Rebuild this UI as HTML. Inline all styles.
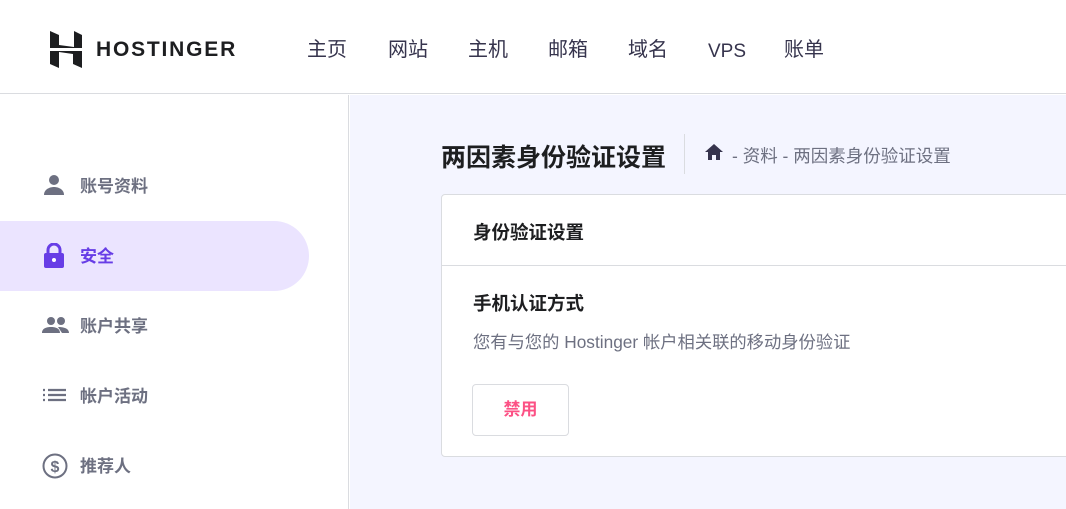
<!DOCTYPE html><html><head><meta charset="utf-8"><style>
*{margin:0;padding:0;box-sizing:border-box}
body{width:1066px;height:509px;overflow:hidden;background:#fff;font-family:"Liberation Sans","Noto Sans CJK SC",sans-serif;position:relative}
.top{position:absolute;left:0;top:0;width:1066px;height:94px;border-bottom:1px solid #dadce0;background:#fff}
.nav{position:absolute;top:36px;font-size:20px;line-height:28px;height:28px;color:#36344d}
.side{position:absolute;left:0;top:95px;width:349px;height:414px;border-right:1px solid #dadce0;background:#fff}
.main{position:absolute;left:350px;top:95px;width:716px;height:414px;background:#f4f5ff}
.it{position:absolute;left:0;width:309px;height:70px;font-size:17px;font-weight:bold;color:#6d7081}
.it span{position:absolute;left:80px;top:21px}
.it svg{position:absolute;left:42px;top:22px}
.sel{background:#ebe4ff;border-radius:0 35px 35px 0;color:#673de6}
.card{position:absolute;left:441px;top:194px;width:640px;height:263px;background:#fff;border:1px solid #dadce0;border-radius:4px}
</style></head><body>
<div class="top">
<svg style="position:absolute;left:50px;top:31px" width="32" height="37" viewBox="0 0 32 37"><path d="M0 0L9 4V14L24 16V0L32 4V17H0Z M0 20H32V37L23 33V23L9 21V37L0 33Z" fill="#1d1e20"/></svg>
<div style="position:absolute;left:96px;top:38px;font-size:21px;font-weight:bold;letter-spacing:1.8px;color:#1d1e20">HOSTINGER</div>
<div class="nav" style="left:307px">主页</div><div class="nav" style="left:388px">网站</div><div class="nav" style="left:468px">主机</div><div class="nav" style="left:548px">邮箱</div><div class="nav" style="left:628px">域名</div><div class="nav" style="left:708px;top:38px;font-size:19px">VPS</div><div class="nav" style="left:784px">账单</div>
</div>
<div class="side">
<div class="it" style="top:56px"><svg width="24" height="24" viewBox="0 0 24 24"><circle cx="12" cy="7" r="5" fill="#6d7081"/><path d="M2 22c0-6 6-8 10-8s10 2 10 8z" fill="#6d7081"/></svg><span>账号资料</span></div>
<div class="it sel" style="top:126px"><svg width="24" height="26" viewBox="0 0 24 26"><path d="M6 11V7a6 6 0 0112 0v4" stroke="#673de6" stroke-width="3" fill="none"/><rect x="2" y="10" width="20" height="15" rx="2" fill="#673de6"/><circle cx="12" cy="17" r="2" fill="#fff"/></svg><span style="color:#673de6">安全</span></div>
<div class="it" style="top:196px"><svg width="28" height="24" viewBox="0 0 28 24"><circle cx="9" cy="8" r="4" fill="#6d7081"/><circle cx="19" cy="8" r="4" fill="#6d7081"/><path d="M0 20c0-5 5-6 9-6s9 1 9 6zM16 14c5 0 11 1 11 6h-7z" fill="#6d7081"/></svg><span>账户共享</span></div>
<div class="it" style="top:266px"><svg width="24" height="24" viewBox="0 0 24 24"><path d="M1 7h2M1 12h2M1 17h2M6 7h18M6 12h18M6 17h18" stroke="#6d7081" stroke-width="2.2"/></svg><span>帐户活动</span></div>
<div class="it" style="top:336px"><svg width="26" height="26" viewBox="0 0 26 26"><circle cx="13" cy="13" r="11.5" stroke="#6d7081" stroke-width="2" fill="none"/><text x="13" y="19" font-size="16" text-anchor="middle" fill="#6d7081" font-family="Liberation Sans">$</text></svg><span>推荐人</span></div>
</div>
<div class="main"></div>
<div style="position:absolute;left:441px;top:138px;font-size:25px;font-weight:bold;color:#1d1e20">两因素身份验证设置</div>
<div style="position:absolute;left:684px;top:134px;width:1px;height:40px;background:#dadce0"></div>
<svg style="position:absolute;left:704px;top:143px" width="20" height="18" viewBox="0 0 20 18"><path d="M10 1L1 9h3v8h4v-5h4v5h4V9h3z" fill="#36344d"/></svg>
<div style="position:absolute;left:732px;top:143px;font-size:17.5px;color:#6d7081">- 资料 - 两因素身份验证设置</div>
<div class="card">
<div style="position:absolute;left:31px;top:24px;font-size:18.5px;font-weight:bold;color:#1d1e20">身份验证设置</div>
<div style="position:absolute;left:0;top:70px;width:100%;height:1px;background:#dadce0"></div>
<div style="position:absolute;left:31px;top:95px;font-size:18.5px;font-weight:bold;color:#1d1e20">手机认证方式</div>
<div style="position:absolute;left:31px;top:133px;font-size:17.3px;color:#6d7081">您有与您的 Hostinger 帐户相关联的移动身份验证</div>
<div style="position:absolute;left:30px;top:189px;width:97px;height:52px;border:1px solid #dadce0;border-radius:4px;font-size:17px;font-weight:bold;color:#fc5185;text-align:center;line-height:50px">禁用</div>
</div>
</body></html>
